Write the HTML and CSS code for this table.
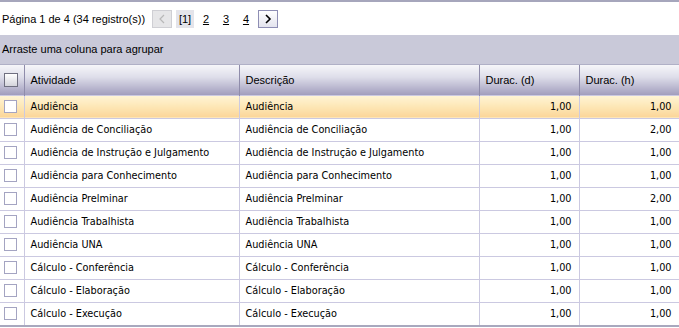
FILE: index.html
```html
<!DOCTYPE html>
<html lang="pt">
<head>
<meta charset="utf-8">
<link rel="stylesheet" href="styles.css">
</head>
<body>
<div class="grid">
  <div class="pager">
    <span class="summary">Página 1 de 4 (34 registro(s))</span>
    <span class="btn btn-disabled"><svg width="8" height="10" viewBox="0 0 8 10"><path d="M6 1 L2 5 L6 9" fill="none" stroke="#b8b8b8" stroke-width="1.2"/></svg></span>
    <span class="current">[1]</span>
    <a class="page">2</a>
    <a class="page">3</a>
    <a class="page">4</a>
    <span class="btn btn-next"><svg width="8" height="10" viewBox="0 0 8 10"><path d="M2 1 L6 5 L2 9" fill="none" stroke="#000" stroke-width="1.6"/></svg></span>
  </div>
  <div class="group-panel">Arraste uma coluna para agrupar</div>
  <table class="data">
    <colgroup>
      <col class="c-check"><col class="c-atv"><col class="c-desc"><col class="c-d"><col class="c-h">
    </colgroup>
    <thead>
      <tr>
        <th class="check"><span class="hbox"></span></th>
        <th>Atividade</th>
        <th>Descrição</th>
        <th>Durac. (d)</th>
        <th>Durac. (h)</th>
      </tr>
    </thead>
    <tbody>
      <tr class="sel"><td class="check"><span class="box"></span></td><td>Audiência</td><td>Audiência</td><td class="num">1,00</td><td class="num">1,00</td></tr>
      <tr><td class="check"><span class="box"></span></td><td>Audiência de Conciliação</td><td>Audiência de Conciliação</td><td class="num">1,00</td><td class="num">2,00</td></tr>
      <tr><td class="check"><span class="box"></span></td><td>Audiência de Instrução e Julgamento</td><td>Audiência de Instrução e Julgamento</td><td class="num">1,00</td><td class="num">1,00</td></tr>
      <tr><td class="check"><span class="box"></span></td><td>Audiência para Conhecimento</td><td>Audiência para Conhecimento</td><td class="num">1,00</td><td class="num">1,00</td></tr>
      <tr><td class="check"><span class="box"></span></td><td>Audiência Prelminar</td><td>Audiência Prelminar</td><td class="num">1,00</td><td class="num">2,00</td></tr>
      <tr><td class="check"><span class="box"></span></td><td>Audiência Trabalhista</td><td>Audiência Trabalhista</td><td class="num">1,00</td><td class="num">1,00</td></tr>
      <tr><td class="check"><span class="box"></span></td><td>Audiência UNA</td><td>Audiência UNA</td><td class="num">1,00</td><td class="num">1,00</td></tr>
      <tr><td class="check"><span class="box"></span></td><td>Cálculo - Conferência</td><td>Cálculo - Conferência</td><td class="num">1,00</td><td class="num">1,00</td></tr>
      <tr><td class="check"><span class="box"></span></td><td>Cálculo - Elaboração</td><td>Cálculo - Elaboração</td><td class="num">1,00</td><td class="num">1,00</td></tr>
      <tr><td class="check"><span class="box"></span></td><td>Cálculo - Execução</td><td>Cálculo - Execução</td><td class="num">1,00</td><td class="num">1,00</td></tr>
    </tbody>
  </table>
</div>
</body>
</html>
```
FILE: styles.css
```css
html, body {
  margin: 0;
  padding: 0;
  background: #ffffff;
}
.grid {
  width: 679px;
  border-top: 2px solid #a6a6bc;
  font-family: "Liberation Sans", Arial, sans-serif;
  font-size: 11px;
  color: #000;
}
.pager {
  height: 33px;
  display: flex;
  align-items: center;
  padding-left: 2px;
  box-sizing: border-box;
}
.summary {
  width: 150px;
  flex: none;
  white-space: nowrap;
}
.btn {
  width: 20px;
  height: 18px;
  box-sizing: border-box;
  display: flex;
  align-items: center;
  justify-content: center;
  margin-top: 1px;
  flex: none;
}
.btn-disabled {
  background: #e6e6e8;
  border: 1px solid #cfcfd4;
}
.btn-next {
  background: linear-gradient(#ffffff, #e4e4ee);
  border: 1px solid #8e8eb4;
  margin-left: 2px;
}
.current {
  background: #e4e4ea;
  width: 18px;
  height: 18px;
  line-height: 18px;
  text-align: center;
  margin-left: 4px;
  margin-right: 2px;
  margin-top: 1px;
}
.page {
  color: #000;
  text-decoration: underline;
  width: 20px;
  text-align: center;
  margin-top: 1px;
}
.group-panel {
  height: 29px;
  line-height: 29px;
  background: #c9c9d9;
  border-bottom: 1px solid #b0b0c6;
  padding-left: 2px;
}
.data {
  width: 679px;
  border-collapse: collapse;
  table-layout: fixed;
  border-bottom: 2px solid #a8a8be;
}
.c-check { width: 24px; }
.c-atv { width: 215px; }
.c-desc { width: 240px; }
.c-d { width: 100px; }
.c-h { width: 100px; }
.data th {
  height: 30px;
  padding: 0 0 0 6px;
  text-align: left;
  font-weight: normal;
  background: linear-gradient(#f6f6f9 0%, #dedeea 40%, #a19dbd 100%);
  border-left: 1px solid #c2c0d6;
  border-right: 1px solid #8f8cab;
  box-sizing: border-box;
}
.data th.check {
  padding: 0 0 0 4px;
  border-left: none;
}
.data td {
  height: 22px;
  padding: 0 0 0 6px;
  font-family: "DejaVu Sans Condensed", "DejaVu Sans", sans-serif;
  font-size: 10.8px;
  border: 1px solid #cbc9e1;
  white-space: nowrap;
  overflow: hidden;
}
.data td.check {
  padding: 0 0 0 4px;
  border-left: none;
}
.data td:last-child {
  border-right: 1px solid #a8a8be;
}
.data td.num {
  text-align: right;
  padding: 0 7px 0 0;
}
.data tr.sel td {
  background: linear-gradient(#fff4d6 0%, #fde7b6 50%, #fbd598 100%);
}
.hbox {
  display: block;
  width: 14px;
  height: 14px;
  box-sizing: border-box;
  border: 1px solid #6f6f80;
  background: linear-gradient(#ffffff, #d4d4dc);
}
.box {
  display: block;
  width: 13px;
  height: 13px;
  box-sizing: border-box;
  border: 1px solid #a4a4c2;
  background: #fff;
}
```
